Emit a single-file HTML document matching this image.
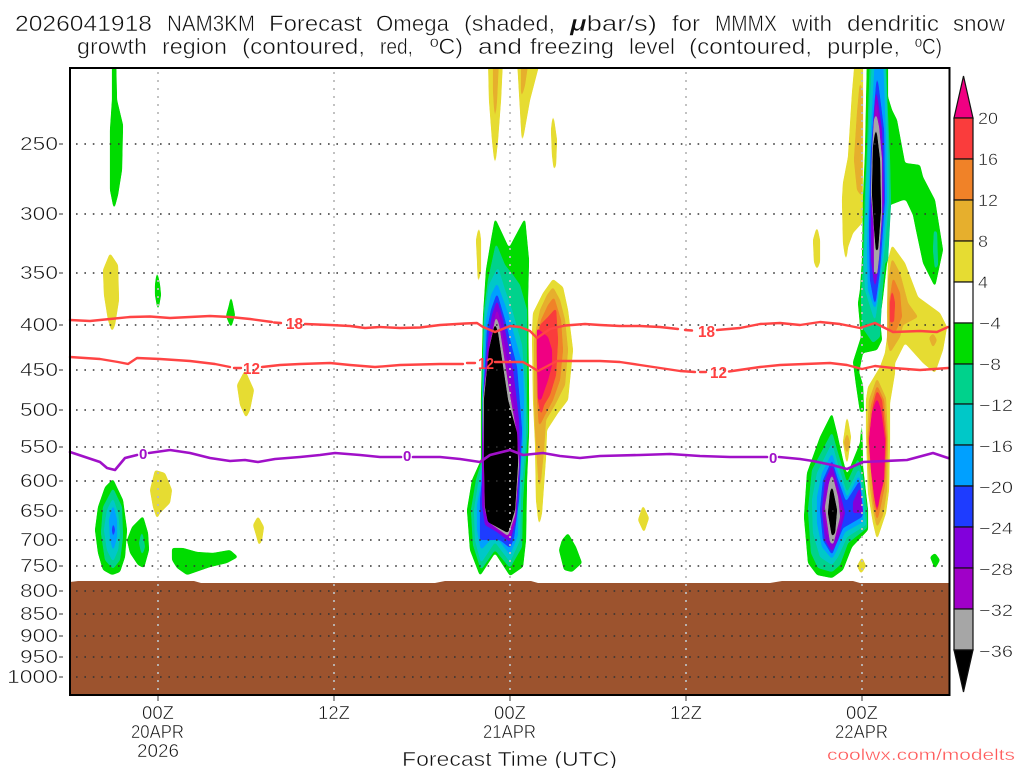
<!DOCTYPE html>
<html><head><meta charset="utf-8"><title>NAM3KM Forecast Omega</title>
<style>
html,body{margin:0;padding:0;background:#fff;width:1024px;height:768px;overflow:hidden}
svg{display:block}
text{font-family:"Liberation Sans",sans-serif;fill:#111;stroke:#fff;stroke-width:.5px;paint-order:fill stroke}
.t text{font-size:22px}
.a text{font-size:18px}
.c text{font-size:17px}
.lr{font-size:16px;font-weight:bold;fill:#ff4040;stroke:none}
.lp{font-size:15px;font-weight:bold;fill:#a010c8;stroke:none}
.f polygon{filter:url(#s)}
.g{fill:#00dc00}.tl{fill:#00d28c}.cy{fill:#00c8c8}.b1{fill:#00a0ff}.b2{fill:#1e3cff}.p1{fill:#8200dc}.p2{fill:#a000c8}.gy{fill:#a6a6a6}.k{fill:#000}
.y{fill:#e6dc32}.o1{fill:#e6af2d}.o2{fill:#f08228}.r{fill:#fa3c3c}.m{fill:#f00082}
</style></head><body>
<svg width="1024" height="768" viewBox="0 0 1024 768" xmlns="http://www.w3.org/2000/svg">
<defs>
<filter id="s" filterUnits="userSpaceOnUse" x="0" y="0" width="1024" height="768" color-interpolation-filters="sRGB">
<feGaussianBlur stdDeviation="1.3"/>
<feColorMatrix type="matrix" values="1 0 0 0 0 0 1 0 0 0 0 0 1 0 0 0 0 0 8 -3.2"/>
</filter>
</defs>
<rect width="1024" height="768" fill="#fff"/>

<g class="f">
<!-- left small features -->
<polygon class="g" points="112,58 116,58 117,100 123,125 122,170 118,195 114,210 110,190 110,130 112,100"/>
<polygon class="y" points="110,253 118,265 119,300 115,325 112,332 108,320 104,295 103,270"/>
<polygon class="g" points="157,270 160,285 161,295 158,312 155,295 155,285"/>
<polygon class="g" points="231,295 235,315 231,328 226,316 229,305"/>
<polygon class="y" points="245,370 254,390 250,410 246,418 240,405 237,385"/>
<polygon class="y" points="155,470 165,473 172,490 170,503 160,513 157,519 153,507 150,490"/>
<polygon class="g" points="113,479 123,500 127,530 125,557 120,572 112,575 103,570 98,553 95,530 98,507 105,487"/>
<polygon class="tl" points="113,488 122,507 123,537 120,560 113,569 105,560 101,533 103,507"/>
<polygon class="cy" points="113,498 118,513 120,533 118,550 113,562 107,550 104,530 107,510"/>
<polygon class="b1" points="113,504 117,520 117,537 113,552 110,537 109,520"/>
<polygon class="b2" points="113,520 115,530 113,540 112,530"/>
<polygon class="g" points="143,516 148,533 149,550 144,568 138,565 130,553 127,540 132,527"/>
<polygon class="tl" points="142,530 145,547 142,556 139,543"/>
<polygon class="g" points="172,548 183,548 197,552 213,553 230,550 238,557 227,563 210,567 187,575 177,568 172,560"/>
<polygon class="y" points="258,516 264,527 262,540 259,546 256,535 253,525"/>

<!-- 21APR top plumes -->
<polygon class="y" points="488,58 503,58 501,100 498,140 495,168 492,140 489,100"/>
<polygon class="o1" points="493,58 499,58 497,100 495,125 493,90"/>
<polygon class="y" points="517,58 541,58 530,100 522,145 520,110"/>
<polygon class="o1" points="521,58 529,58 525,85 521,100"/>
<polygon class="y" points="553,112 557,140 556,165 554,172 552,155 551,130"/>
<polygon class="y" points="479,225 481,240 481,270 478,287 477,260 476,240"/>
<polygon class="y" points="643,505 649,518 644,533 638,520"/>
<polygon class="g" points="568,533 576,547 582,563 572,572 564,570 559,550 562,540"/>

<!-- 21APR main blob -->
<polygon class="g" points="495,218 509,248 525,218 529,260 528,300 529,400 529,433 527,480 526,540 523,567 510,576 495,553 480,576 470,550 467,510 472,480 481,460 481,400 483,317 486,270 491,240"/>
<polygon class="tl" points="496,243 505,265 513,275 520,285 527,310 527,400 528,430 523,500 522,547 510,568 495,550 481,570 473,545 471,510 476,480 482,460 482,400 484,310 488,280"/>
<polygon class="cy" points="498,267 505,290 512,310 522,345 526,400 526,440 521,495 520,540 510,562 495,542 481,563 475,540 474,510 478,485 482,465 482,400 484,320 489,285"/>
<polygon class="b1" points="497,283 508,313 523,367 524,400 523,440 518,500 518,535 510,555 495,535 481,550 477,530 477,505 480,490 483,460 483,400 486,320 491,295"/>
<polygon class="b2" points="497,293 505,320 517,367 522,430 519,500 514,538 510,548 500,540 480,540 480,500 483,470 483,400 487,330 491,310"/>
<polygon class="p1" points="497,300 503,320 513,370 519,420 520,460 516,520 510,542 497,532 485,525 482,505 482,450 483,400 488,340 492,315"/>
<polygon class="p2" points="497,308 501,325 510,380 517,430 519,460 515,520 510,538 497,530 487,520 484,505 483,400 490,340"/>
<polygon class="gy" points="496,316 499,325 509,390 516,430 519,465 515,515 508,536 490,523 485,510 483,400 490,345"/>
<polygon class="k" points="495,323 498,333 508,400 517,433 518,463 515,510 508,533 488,522 485,507 484,460 484,400 489,350"/>

<!-- 21APR positive blob -->
<polygon class="y" points="553,279 563,287 568,310 573,350 568,400 558,413 547,430 546,457 542,513 539,527 536,500 535,443 533,400 532,333 533,313 543,293"/>
<polygon class="o1" points="553,287 560,300 565,320 568,350 565,385 555,405 546,420 544,450 541,480 539,490 537,460 535,430 534,400 534,340 540,310 547,295"/>
<polygon class="o2" points="554,297 561,320 563,350 560,380 553,400 545,415 539,427 537,400 536,340 541,320 548,305"/>
<polygon class="r" points="556,308 558,340 556,375 550,395 544,405 541,416 538,400 537,350 540,325 548,317"/>
<polygon class="m" points="537,328 548,337 552,350 552,365 548,380 541,400 538,400 537,360"/>

<!-- 22APR upper yellow -->
<polygon class="y" points="855,58 863,58 863,200 862,223 853,233 848,247 846,263 843,243 842,200 843,183 848,157 852,93"/>
<polygon class="o1" points="860,80 863,93 862,197 857,190 854,160 857,113"/>
<polygon class="y" points="817,226 820,240 820,262 817,270 814,262 813,240"/>

<!-- 22APR right yellow + plume -->
<polygon class="y" points="892,245 905,263 918,297 940,313 947,327 943,350 935,373 923,363 905,343 895,363 895,373 890,403 890,440 889,490 886,513 877,540 873,523 868,493 866,433 866,400 868,387 880,367 885,353 888,330 887,313 888,260"/>
<polygon class="o1" points="892,258 900,273 908,303 918,317 903,325 900,337 890,353 887,340 888,280"/>
<polygon class="o2" points="893,277 900,293 902,317 895,333 889,330 889,303"/>
<polygon class="r" points="892,288 895,303 894,322 890,323 890,303"/>
<polygon class="o1" points="933,333 937,340 933,348 929,338"/>
<polygon class="o1" points="877,378 886,398 888,440 887,490 883,515 877,528 873,510 869,480 867,440 869,400"/>
<polygon class="o2" points="877,385 884,400 887,440 885,485 881,505 877,522 873,500 871,470 868,440 871,405"/>
<polygon class="r" points="877,390 882,400 886,440 884,480 880,497 877,515 874,495 872,470 869,440 873,405"/>
<polygon class="m" points="877,398 881,410 885,440 884,480 880,495 877,512 874,495 871,470 869,440 872,412"/>

<!-- 22APR column -->
<polygon class="g" points="867,58 888,58 888,97 892,110 897,120 905,163 920,165 923,177 935,200 943,250 935,287 923,263 916,230 913,215 906,200 903,200 890,205 888,260 887,263 883,297 880,320 882,340 877,350 863,353 859,372 863,385 864,412 860,412 856,385 853,362 861,337 858,303 860,290 862,260 863,200 865,153"/>
<polygon class="tl" points="870,58 886,58 887,93 890,160 891,203 888,260 885,263 882,297 880,337 873,343 862,327 861,297 863,263 865,193 867,150"/>
<polygon class="tl" points="934,230 937,232 938,265 935,270 933,250"/>
<polygon class="cy" points="872,58 885,58 888,140 889,200 884,255 878,300 875,322 865,290 864,260 866,190 869,130"/>
<polygon class="b1" points="875,58 883,58 886,140 887,200 882,260 877,300 875,310 868,290 867,250 869,190 871,130"/>
<polygon class="b2" points="877,73 884,130 885,200 880,270 875,307 870,280 869,230 871,150 874,110"/>
<polygon class="p1" points="876,87 882,130 884,200 878,270 875,290 871,260 871,200 873,130"/>
<polygon class="p2" points="876,95 880,130 882,200 877,265 875,278 873,245 873,190 874,130"/>
<polygon class="gy" points="876,113 879,127 882,160 882,213 879,257 877,275 874,273 874,230 871,193 872,153 874,120"/>
<polygon class="k" points="876,126 880,160 881,210 878,250 876,252 874,227 872,193 873,147"/>

<!-- 22APR lower blob -->
<polygon class="g" points="832,413 837,433 843,460 847,475 860,443 862,407 863,467 868,510 868,530 852,547 843,570 832,578 817,575 808,563 804,517 807,473 820,437"/>
<polygon class="tl" points="832,432 838,453 847,483 858,458 863,477 867,510 867,528 848,543 840,565 832,572 818,568 811,553 808,510 812,470"/>
<polygon class="cy" points="832,443 838,465 847,493 859,468 863,493 866,525 847,537 838,557 832,565 820,557 813,533 812,500 817,473"/>
<polygon class="b1" points="832,453 837,470 847,498 859,475 863,500 863,522 845,532 837,550 832,559 822,547 817,523 817,497 822,473"/>
<polygon class="b2" points="832,460 837,477 846,502 860,480 863,513 862,517 843,528 835,547 832,555 823,540 820,510 823,480"/>
<polygon class="p1" points="832,465 840,493 845,513 838,540 832,552 825,540 822,510 825,480"/>
<polygon class="p1" points="860,487 863,513 853,513 853,502"/>
<polygon class="p2" points="832,472 838,493 843,513 837,535 832,545 827,533 824,510 827,490"/>
<polygon class="gy" points="832,474 838,497 840,517 833,545 830,542 825,507 829,483"/>
<polygon class="k" points="832,485 837,510 835,533 832,537 828,513 830,493"/>
<polygon class="y" points="847,414 851,437 847,467 843,442"/>
<polygon class="o1" points="847,432 850,443 847,455 844,443"/>
<polygon class="y" points="862,557 866,566 861,574 857,566"/>
<polygon class="g" points="935,553 940,560 935,569 930,557"/>
</g>

<rect x="0" y="0" width="1024" height="68" fill="#fff"/>

<!-- terrain -->
<polygon fill="#9c532e" points="70,582 78,581 194,581 201,583 435,583 445,581 531,581 538,583 770,583 782,581 853,581 860,583 949,583 949,695 70,695"/>

<!-- gridlines -->
<g stroke="#bbb" stroke-width="1.8" stroke-dasharray="2 6">
<line x1="158" y1="72" x2="158" y2="695"/><line x1="334" y1="72" x2="334" y2="695"/><line x1="510" y1="72" x2="510" y2="695"/><line x1="686" y1="72" x2="686" y2="695"/><line x1="862" y1="72" x2="862" y2="695"/>
</g>
<g stroke="#333" stroke-width="1.5" stroke-dasharray="1.6 6.8">
<line x1="76" y1="144" x2="949" y2="144"/><line x1="76" y1="214" x2="949" y2="214"/><line x1="76" y1="273" x2="949" y2="273"/><line x1="76" y1="325" x2="949" y2="325"/><line x1="76" y1="370" x2="949" y2="370"/><line x1="76" y1="410" x2="949" y2="410"/><line x1="76" y1="447" x2="949" y2="447"/><line x1="76" y1="481" x2="949" y2="481"/><line x1="76" y1="511" x2="949" y2="511"/><line x1="76" y1="540" x2="949" y2="540"/><line x1="76" y1="566" x2="949" y2="566"/><line x1="76" y1="591" x2="949" y2="591"/><line x1="76" y1="614" x2="949" y2="614"/><line x1="76" y1="636" x2="949" y2="636"/><line x1="76" y1="657" x2="949" y2="657"/><line x1="76" y1="677" x2="949" y2="677"/>
</g>

<!-- contours -->
<g fill="none" stroke="#ff4444" stroke-width="2.4" stroke-linejoin="round" stroke-linecap="round">
<polyline points="70,320 90,321 110,319 130,317 150,316.5 170,318 190,317 210,316 230,317 250,319 272,322"/>
<polyline points="274,322.500 281,323"/>
<polyline points="305,324 330,325 350,326 365,328 380,327 400,328 420,327.500 440,325 465,323.500 477,323 483,327 495,332 510,326 520,327 530,331 537,338 550,329 565,325.500 585,324 600,325 620,326 640,326 660,327 678,329"/>
<polyline points="685,330 692,330.500"/>
<polyline points="717,330 740,328 760,324 780,323 800,325 820,322 840,324 860,328 875,323 893,332 920,331 937,332 948,327"/>
<polyline points="70,357 100,359 118,362 128,364 137,358 160,359 190,361 215,364 230,367"/>
<polyline points="234,368 241,368"/>
<polyline points="262,367 280,365 300,364 330,363 350,365 375,367 400,365 440,364 463,364"/>
<polyline points="467,363 475,363"/>
<polyline points="495,362 523,362 530,366 538,371 557,361 600,361 620,362 640,365 660,368 680,371 695,372"/>
<polyline points="700,372 706,372"/>
<polyline points="729,371.500 760,367 780,365 830,363 847,365 862,369 875,366 893,368 920,370 948,368"/>
</g>
<g fill="none" stroke="#a010c8" stroke-width="2.6" stroke-linejoin="round" stroke-linecap="round">
<polyline points="70,452 85,457 100,462 107,468 115,470 125,458 137,455"/>
<polyline points="149,453 170,450 190,453 210,458 230,461 245,460 258,462 275,459 300,457 320,455 335,453 360,455 380,457 401,457"/>
<polyline points="413,457 440,457 460,459 480,462 490,455 510,450 523,455 543,453 560,456 580,458 600,456 640,455 670,454 700,456 730,457 767,457"/>
<polyline points="779,457 800,459 813,461 832,465 847,469 863,462 907,460 933,453 948,458"/>
</g>
<text class="lr" x="286" y="329" textLength="17" lengthAdjust="spacingAndGlyphs">18</text>
<text class="lr" x="698" y="337" textLength="17" lengthAdjust="spacingAndGlyphs">18</text>
<text class="lr" x="243" y="374" textLength="17" lengthAdjust="spacingAndGlyphs">12</text>
<text class="lr" x="478" y="369" textLength="16" lengthAdjust="spacingAndGlyphs">12</text>
<text class="lr" x="710" y="378" textLength="17" lengthAdjust="spacingAndGlyphs">12</text>
<text class="lp" x="139" y="459">0</text>
<text class="lp" x="403" y="461">0</text>
<text class="lp" x="769" y="463">0</text>

<!-- frame -->
<rect x="70" y="68" width="879.500" height="627" fill="none" stroke="#000" stroke-width="2"/>
<g stroke="#333" stroke-width="1">
<line x1="158" y1="696" x2="158" y2="701"/><line x1="334" y1="696" x2="334" y2="701"/><line x1="510" y1="696" x2="510" y2="701"/><line x1="686" y1="696" x2="686" y2="701"/><line x1="862" y1="696" x2="862" y2="701"/>
<line x1="59" y1="144" x2="63" y2="144"/><line x1="59" y1="214" x2="63" y2="214"/><line x1="59" y1="273" x2="63" y2="273"/><line x1="59" y1="325" x2="63" y2="325"/><line x1="59" y1="370" x2="63" y2="370"/><line x1="59" y1="410" x2="63" y2="410"/><line x1="59" y1="447" x2="63" y2="447"/><line x1="59" y1="481" x2="63" y2="481"/><line x1="59" y1="511" x2="63" y2="511"/><line x1="59" y1="540" x2="63" y2="540"/><line x1="59" y1="566" x2="63" y2="566"/><line x1="59" y1="591" x2="63" y2="591"/><line x1="59" y1="614" x2="63" y2="614"/><line x1="59" y1="636" x2="63" y2="636"/><line x1="59" y1="657" x2="63" y2="657"/><line x1="59" y1="677" x2="63" y2="677"/>
</g>

<!-- colorbar -->
<g stroke="#111" stroke-width="1.2">
<polygon fill="#f00082" points="963.500,76 973,118 954,118"/>
<rect x="954" y="118" width="19" height="41" fill="#fa3c3c"/>
<rect x="954" y="159" width="19" height="41" fill="#f08228"/>
<rect x="954" y="200" width="19" height="41" fill="#e6af2d"/>
<rect x="954" y="241" width="19" height="41" fill="#e6dc32"/>
<rect x="954" y="282" width="19" height="41" fill="#fff"/>
<rect x="954" y="323" width="19" height="41" fill="#00dc00"/>
<rect x="954" y="364" width="19" height="40" fill="#00d28c"/>
<rect x="954" y="404" width="19" height="41" fill="#00c8c8"/>
<rect x="954" y="445" width="19" height="41" fill="#00a0ff"/>
<rect x="954" y="486" width="19" height="41" fill="#1e3cff"/>
<rect x="954" y="527" width="19" height="41" fill="#8200dc"/>
<rect x="954" y="568" width="19" height="41" fill="#a000c8"/>
<rect x="954" y="609" width="19" height="41" fill="#a6a6a6"/>
<polygon fill="#000" points="954,650 973,650 963.500,692"/>
</g>
<g class="c">
<text x="978" y="124" textLength="20" lengthAdjust="spacingAndGlyphs">20</text>
<text x="978" y="165" textLength="20" lengthAdjust="spacingAndGlyphs">16</text>
<text x="978" y="206" textLength="20" lengthAdjust="spacingAndGlyphs">12</text>
<text x="978" y="247" textLength="10" lengthAdjust="spacingAndGlyphs">8</text>
<text x="978" y="288" textLength="10" lengthAdjust="spacingAndGlyphs">4</text>
<text x="979" y="329" textLength="22" lengthAdjust="spacingAndGlyphs">−4</text>
<text x="979" y="370" textLength="22" lengthAdjust="spacingAndGlyphs">−8</text>
<text x="979" y="411" textLength="34" lengthAdjust="spacingAndGlyphs">−12</text>
<text x="979" y="452" textLength="34" lengthAdjust="spacingAndGlyphs">−16</text>
<text x="979" y="493" textLength="34" lengthAdjust="spacingAndGlyphs">−20</text>
<text x="979" y="534" textLength="34" lengthAdjust="spacingAndGlyphs">−24</text>
<text x="979" y="575" textLength="34" lengthAdjust="spacingAndGlyphs">−28</text>
<text x="979" y="616" textLength="34" lengthAdjust="spacingAndGlyphs">−32</text>
<text x="979" y="657" textLength="34" lengthAdjust="spacingAndGlyphs">−36</text>
</g>

<!-- y labels -->
<g class="a">
<text x="20" y="150" textLength="38" lengthAdjust="spacingAndGlyphs">250</text>
<text x="20" y="220" textLength="38" lengthAdjust="spacingAndGlyphs">300</text>
<text x="20" y="279" textLength="38" lengthAdjust="spacingAndGlyphs">350</text>
<text x="20" y="331" textLength="38" lengthAdjust="spacingAndGlyphs">400</text>
<text x="20" y="376" textLength="38" lengthAdjust="spacingAndGlyphs">450</text>
<text x="20" y="416" textLength="38" lengthAdjust="spacingAndGlyphs">500</text>
<text x="20" y="453" textLength="38" lengthAdjust="spacingAndGlyphs">550</text>
<text x="20" y="487" textLength="38" lengthAdjust="spacingAndGlyphs">600</text>
<text x="20" y="517" textLength="38" lengthAdjust="spacingAndGlyphs">650</text>
<text x="20" y="546" textLength="38" lengthAdjust="spacingAndGlyphs">700</text>
<text x="20" y="572" textLength="38" lengthAdjust="spacingAndGlyphs">750</text>
<text x="20" y="597" textLength="38" lengthAdjust="spacingAndGlyphs">800</text>
<text x="20" y="620" textLength="38" lengthAdjust="spacingAndGlyphs">850</text>
<text x="20" y="642" textLength="38" lengthAdjust="spacingAndGlyphs">900</text>
<text x="20" y="663" textLength="38" lengthAdjust="spacingAndGlyphs">950</text>
<text x="7" y="683" textLength="51" lengthAdjust="spacingAndGlyphs">1000</text>
</g>

<!-- x labels -->
<g class="a">
<text x="142" y="719" textLength="32" lengthAdjust="spacingAndGlyphs">00Z</text>
<text x="131" y="738" textLength="53" lengthAdjust="spacingAndGlyphs">20APR</text>
<text x="137" y="757" textLength="42" lengthAdjust="spacingAndGlyphs">2026</text>
<text x="318" y="719" textLength="32" lengthAdjust="spacingAndGlyphs">12Z</text>
<text x="494" y="719" textLength="32" lengthAdjust="spacingAndGlyphs">00Z</text>
<text x="483" y="738" textLength="53" lengthAdjust="spacingAndGlyphs">21APR</text>
<text x="670" y="719" textLength="32" lengthAdjust="spacingAndGlyphs">12Z</text>
<text x="846" y="719" textLength="32" lengthAdjust="spacingAndGlyphs">00Z</text>
<text x="835" y="738" textLength="53" lengthAdjust="spacingAndGlyphs">22APR</text>
</g>
<text x="402" y="766" style="font-size:20px" textLength="215" lengthAdjust="spacingAndGlyphs">Forecast Time (UTC)</text>
<text x="827" y="760" style="font-size:16px;fill:#ff5a5a;stroke-width:.3px" textLength="188" lengthAdjust="spacingAndGlyphs">coolwx.com/modelts</text>

<!-- title -->
<g class="t">
<text x="15" y="31" textLength="137" lengthAdjust="spacingAndGlyphs">2026041918</text>
<text x="167" y="31" textLength="88" lengthAdjust="spacingAndGlyphs">NAM3KM</text>
<text x="269" y="31" textLength="93" lengthAdjust="spacingAndGlyphs">Forecast</text>
<text x="376" y="31" textLength="73" lengthAdjust="spacingAndGlyphs">Omega</text>
<text x="464" y="31" textLength="91" lengthAdjust="spacingAndGlyphs">(shaded,</text>
<text x="570" y="31" textLength="87" lengthAdjust="spacingAndGlyphs"><tspan font-style="italic" font-weight="bold">μ</tspan>bar/s)</text>
<text x="672" y="31" textLength="28" lengthAdjust="spacingAndGlyphs">for</text>
<text x="715" y="31" textLength="62" lengthAdjust="spacingAndGlyphs">MMMX</text>
<text x="792" y="31" textLength="40" lengthAdjust="spacingAndGlyphs">with</text>
<text x="847" y="31" textLength="92" lengthAdjust="spacingAndGlyphs">dendritic</text>
<text x="953" y="31" textLength="52" lengthAdjust="spacingAndGlyphs">snow</text>
<text x="77" y="54" textLength="70" lengthAdjust="spacingAndGlyphs">growth</text>
<text x="162" y="54" textLength="65" lengthAdjust="spacingAndGlyphs">region</text>
<text x="242" y="54" textLength="123" lengthAdjust="spacingAndGlyphs">(contoured,</text>
<text x="380" y="54" textLength="33" lengthAdjust="spacingAndGlyphs">red,</text>
<text x="430" y="54" textLength="33" lengthAdjust="spacingAndGlyphs">ºC)</text>
<text x="478" y="54" textLength="44" lengthAdjust="spacingAndGlyphs">and</text>
<text x="530" y="54" textLength="84" lengthAdjust="spacingAndGlyphs">freezing</text>
<text x="629" y="54" textLength="46" lengthAdjust="spacingAndGlyphs">level</text>
<text x="689" y="54" textLength="123" lengthAdjust="spacingAndGlyphs">(contoured,</text>
<text x="827" y="54" textLength="73" lengthAdjust="spacingAndGlyphs">purple,</text>
<text x="915" y="54" textLength="27" lengthAdjust="spacingAndGlyphs">ºC)</text>
</g>
</svg>
</body></html>
